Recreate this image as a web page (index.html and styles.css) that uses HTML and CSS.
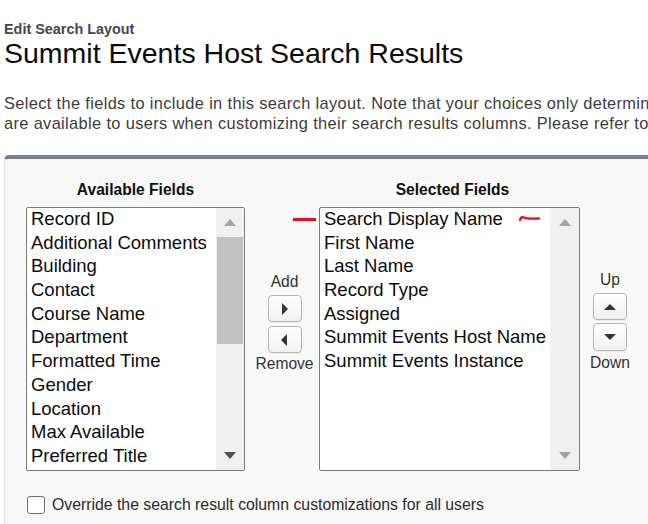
FILE: index.html
```html
<!DOCTYPE html>
<html>
<head>
<meta charset="utf-8">
<link rel="stylesheet" href="styles.css">
</head>
<body>
<div class="page">
  <div class="eyebrow">Edit Search Layout</div>
  <h1 class="title">Summit Events Host Search Results</h1>
  <p class="intro">Select the fields to include in this search layout. Note that your choices only determine which fields<br>are available to users when customizing their search results columns. Please refer to the help for more</p>

  <div class="panel">
    <div class="duel">
      <div class="col col-available">
        <div class="col-head">Available Fields</div>
        <div class="listbox">
          <ul class="options">
            <li>Record ID</li>
            <li>Additional Comments</li>
            <li>Building</li>
            <li>Contact</li>
            <li>Course Name</li>
            <li>Department</li>
            <li>Formatted Time</li>
            <li>Gender</li>
            <li>Location</li>
            <li>Max Available</li>
            <li>Preferred Title</li>
          </ul>
          <div class="scrollbar">
            <div class="sb-btn"><span class="tri-up"></span></div>
            <div class="thumb"></div>
            <div class="sb-btn sb-bottom"><span class="tri-down dark"></span></div>
          </div>
        </div>
      </div>

      <div class="mover mover-mid">
        <div class="mover-label">Add</div>
        <div class="btn"><span class="arr-right"></span></div>
        <div class="btn btn-second"><span class="arr-left"></span></div>
        <div class="mover-label">Remove</div>
      </div>

      <div class="col col-selected">
        <div class="col-head">Selected Fields</div>
        <div class="listbox listbox-selected">
          <ul class="options">
            <li>Search Display Name</li>
            <li>First Name</li>
            <li>Last Name</li>
            <li>Record Type</li>
            <li>Assigned</li>
            <li>Summit Events Host Name</li>
            <li>Summit Events Instance</li>
          </ul>
          <div class="scrollbar">
            <div class="sb-btn"><span class="tri-up"></span></div>
            <div class="sb-btn sb-bottom"><span class="tri-down"></span></div>
          </div>
          <span class="mark-dash"></span>
          <svg class="mark-tilde" width="22" height="8" viewBox="0 0 22 8"><path d="M1 5 Q2.5 1 5 2.5 Q7 4 20 3.5" fill="none" stroke="#e8101a" stroke-width="2.4" stroke-linecap="round"/></svg>
        </div>
      </div>

      <div class="mover mover-right">
        <div class="mover-label">Up</div>
        <div class="btn"><span class="arr-up"></span></div>
        <div class="btn btn-second"><span class="arr-down"></span></div>
        <div class="mover-label">Down</div>
      </div>
    </div>

    <label class="override">
      <span class="checkbox"></span>
      <span>Override the search result column customizations for all users</span>
    </label>
  </div>
</div>
</body>
</html>
```

FILE: styles.css
```css
html, body {
  margin: 0;
  padding: 0;
  overflow: hidden;
  background: #ffffff;
}

body {
  font-family: "Liberation Sans", Arial, sans-serif;
  color: #080707;
  width: 648px;
  height: 524px;
}

.page {
  width: 648px;
  padding-top: 21px;
  overflow: hidden;
}

.eyebrow {
  padding-left: 4px;
  font-size: 14.4px;
  line-height: 16px;
  font-weight: bold;
  color: #46464f;
}

.title {
  margin: 0;
  padding-left: 4px;
  font-size: 28.5px;
  line-height: 32px;
  font-weight: normal;
  color: #0a0a0a;
}

.intro {
  margin: 24px 0 0 0;
  padding-left: 4px;
  font-size: 16.4px;
  letter-spacing: 0.35px;
  line-height: 20px;
  color: #3c3c3c;
  white-space: nowrap;
  overflow: hidden;
}

.panel {
  margin: 22px 0 0 4px;
  width: 700px;
  height: 400px;
  background: #f8f8f8;
  border-top: 4px solid #747e96;
  border-left: 1px solid #e2e2e2;
  border-top-left-radius: 5px;
  padding: 21px 0 0 21px;
}

.duel {
  display: flex;
  align-items: flex-start;
}

.col {
  display: flex;
  flex-direction: column;
}

.col-available { width: 219px; }
.col-selected { width: 261px; }

.col-head {
  text-align: center;
  font-size: 15.6px;
  line-height: 20px;
  font-weight: bold;
  color: #111;
  margin-bottom: 7px;
}

.col-selected .col-head { padding-left: 6px; }

.listbox {
  position: relative;
  display: flex;
  height: 264px;
  box-sizing: border-box;
  border: 1px solid #7a7a7a;
  border-radius: 2px;
  background: #ffffff;
}

.options {
  flex: 1;
  margin: 0;
  padding: 1px 0 0 4px;
  list-style: none;
  overflow: hidden;
}

.options li {
  height: 23.7px;
  font-size: 18.5px;
  line-height: 20px;
  color: #0c0c0c;
  white-space: nowrap;
}

.scrollbar {
  width: 28px;
  background: #f0f0f0;
  display: flex;
  flex-direction: column;
}

.listbox-selected .scrollbar { width: 29px; }

.sb-btn {
  height: 29px;
  display: flex;
  align-items: center;
  justify-content: center;
}

.sb-bottom {
  margin-top: auto;
  height: 30px;
}

.thumb {
  height: 107px;
  margin: 0 1px;
  background: #c1c1c1;
}

.tri-up {
  width: 0;
  height: 0;
  border-left: 6.5px solid transparent;
  border-right: 6.5px solid transparent;
  border-bottom: 7px solid #a3a3a3;
}

.tri-down {
  width: 0;
  height: 0;
  border-left: 6.5px solid transparent;
  border-right: 6.5px solid transparent;
  border-top: 7px solid #a3a3a3;
}

.tri-down.dark { border-top-color: #505050; }

.mover {
  display: flex;
  flex-direction: column;
  align-items: center;
  box-sizing: border-box;
}

.mover-mid {
  width: 74px;
  padding-left: 5px;
  margin-top: 93px;
}

.mover-right {
  padding-left: 10px;
  margin-top: 91px;
}

.mover-label {
  font-size: 15.6px;
  line-height: 18px;
  color: #333333;
}

.mover-mid .mover-label:first-child { margin-bottom: 4px; }
.mover-right .mover-label:first-child { margin-bottom: 4px; }

.btn {
  width: 34px;
  height: 27px;
  box-sizing: border-box;
  border: 1px solid #b4b4b4;
  border-radius: 4px;
  background: linear-gradient(#ffffff, #f1f1f1);
  box-shadow: 0 1px 0 rgba(0,0,0,0.05);
  display: flex;
  align-items: center;
  justify-content: center;
}

.btn-second { margin-top: 4px; margin-bottom: 2px; }
.mover-right .btn-second { margin-top: 3px; height: 28px; margin-bottom: 3px; }

.arr-right {
  width: 0; height: 0;
  border-top: 6.5px solid transparent;
  border-bottom: 6.5px solid transparent;
  border-left: 6px solid #333;
  margin-left: 1px;
}

.arr-left {
  width: 0; height: 0;
  border-top: 6.5px solid transparent;
  border-bottom: 6.5px solid transparent;
  border-right: 6px solid #333;
  margin-right: 1px;
}

.arr-up {
  width: 0; height: 0;
  border-left: 6.5px solid transparent;
  border-right: 6.5px solid transparent;
  border-bottom: 6px solid #333;
}

.arr-down {
  width: 0; height: 0;
  border-left: 6.5px solid transparent;
  border-right: 6.5px solid transparent;
  border-top: 6px solid #333;
}

.mark-dash {
  position: absolute;
  left: -27px;
  top: 10px;
  width: 23px;
  height: 3px;
  background: #e8101a;
}

.mark-tilde {
  position: absolute;
  left: 199px;
  top: 7px;
}

.override {
  display: flex;
  align-items: center;
  margin-top: 24px;
  padding-left: 1px;
  font-size: 15.8px;
  line-height: 20px;
  color: #2b2b2b;
}

.checkbox {
  width: 18px;
  height: 18px;
  box-sizing: border-box;
  border: 1px solid #6e6e6e;
  border-radius: 3px;
  background: #ffffff;
  margin-right: 7px;
}
```
